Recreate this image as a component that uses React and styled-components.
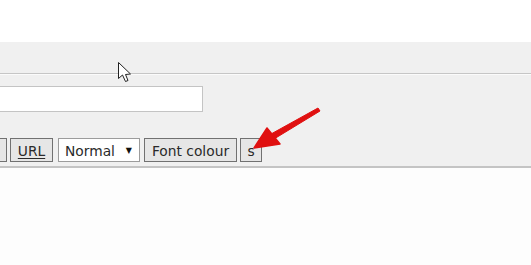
import React from "react";
import styled, { createGlobalStyle } from "styled-components";

const Global = createGlobalStyle`
  html, body { margin: 0; padding: 0; background: #fdfdfd; overflow: hidden; }
  body { font-family: "DejaVu Sans", Verdana, sans-serif; }
`;

const Page = styled.div`
  position: relative;
  width: 531px;
  height: 265px;
  overflow: hidden;
  background: #fdfdfd;
`;

const TopBar = styled.div`
  height: 42px;
  background: #ffffff;
`;

const Panel = styled.div`
  background: #f0f0f0;
  border-bottom: 2px solid #c4c4c4;
  padding-bottom: 4px;
`;

const Header = styled.div`
  height: 31px;
  border-bottom: 1px solid #c6c6c6;
  box-shadow: 0 1px 0 #fbfbfb;
`;

const Body = styled.div`
  padding-top: 12px;
  display: flex;
  flex-direction: column;
  gap: 26px;
`;

const TextField = styled.div`
  margin-left: -10px;
  width: 211px;
  height: 24px;
  background: #fff;
  border: 1px solid #c4c4c4;
`;

const Toolbar = styled.div`
  display: flex;
  align-items: center;
  margin-left: -30px;
`;

const Btn = styled.div`
  box-sizing: border-box;
  height: 24px;
  width: ${(p) => p.$w}px;
  margin-right: ${(p) => p.$gap ?? 4}px;
  padding-top: 1px;
  background: #e6e6e6;
  border: 1px solid #717171;
  color: #2a2a2a;
  font-size: 13.8px;
  line-height: 22px;
  text-align: center;
  white-space: nowrap;
  text-decoration: ${(p) => (p.$u ? "underline" : "none")};
  text-underline-offset: 2px;
`;

const Select = styled.div`
  box-sizing: border-box;
  height: 24px;
  width: 82px;
  margin-left: 1px;
  margin-right: 4px;
  padding: 1px 7px 0 6px;
  background: #fff;
  border: 1px solid #9c9c9c;
  color: #2a2a2a;
  font-size: 13.8px;
  line-height: 22px;
  display: flex;
  align-items: center;
  justify-content: space-between;
`;

const Caret = styled.span`
  font-size: 8px;
  color: #111;
`;

const Overlay = styled.svg`
  position: absolute;
  left: 0;
  top: 0;
  pointer-events: none;
`;

export default function App() {
  return (
    <Page>
      <Global />
      <TopBar />
      <Panel>
        <Header />
        <Body>
          <TextField />
          <Toolbar>
            <Btn $w={37} $gap={3} />
            <Btn $w={43} $gap={4} $u>URL</Btn>
            <Select>
              <span>Normal</span>
              <Caret>▼</Caret>
            </Select>
            <Btn $w={93} $gap={3}>Font colour</Btn>
            <Btn $w={22}>s</Btn>
          </Toolbar>
        </Body>
      </Panel>
      <Overlay width="531" height="265" viewBox="0 0 531 265">
        <path
          d="M118.5 62.5 L118.5 78.5 L122.5 75 L125.5 81.5 L128 80.5 L125.5 74.5 L130.5 74 Z"
          fill="#fff"
          stroke="#222"
          strokeWidth="1"
          strokeLinejoin="round"
        />
        <path d="M318 108 L320 111 L274 139 L271 134 Z" fill="#e01010" stroke="#e01010" strokeWidth="1" strokeLinejoin="round" />
        <path d="M254 148 L267 128 L280 144 Z" fill="#e01010" stroke="#e01010" strokeWidth="1.5" strokeLinejoin="round" />
      </Overlay>
    </Page>
  );
}
